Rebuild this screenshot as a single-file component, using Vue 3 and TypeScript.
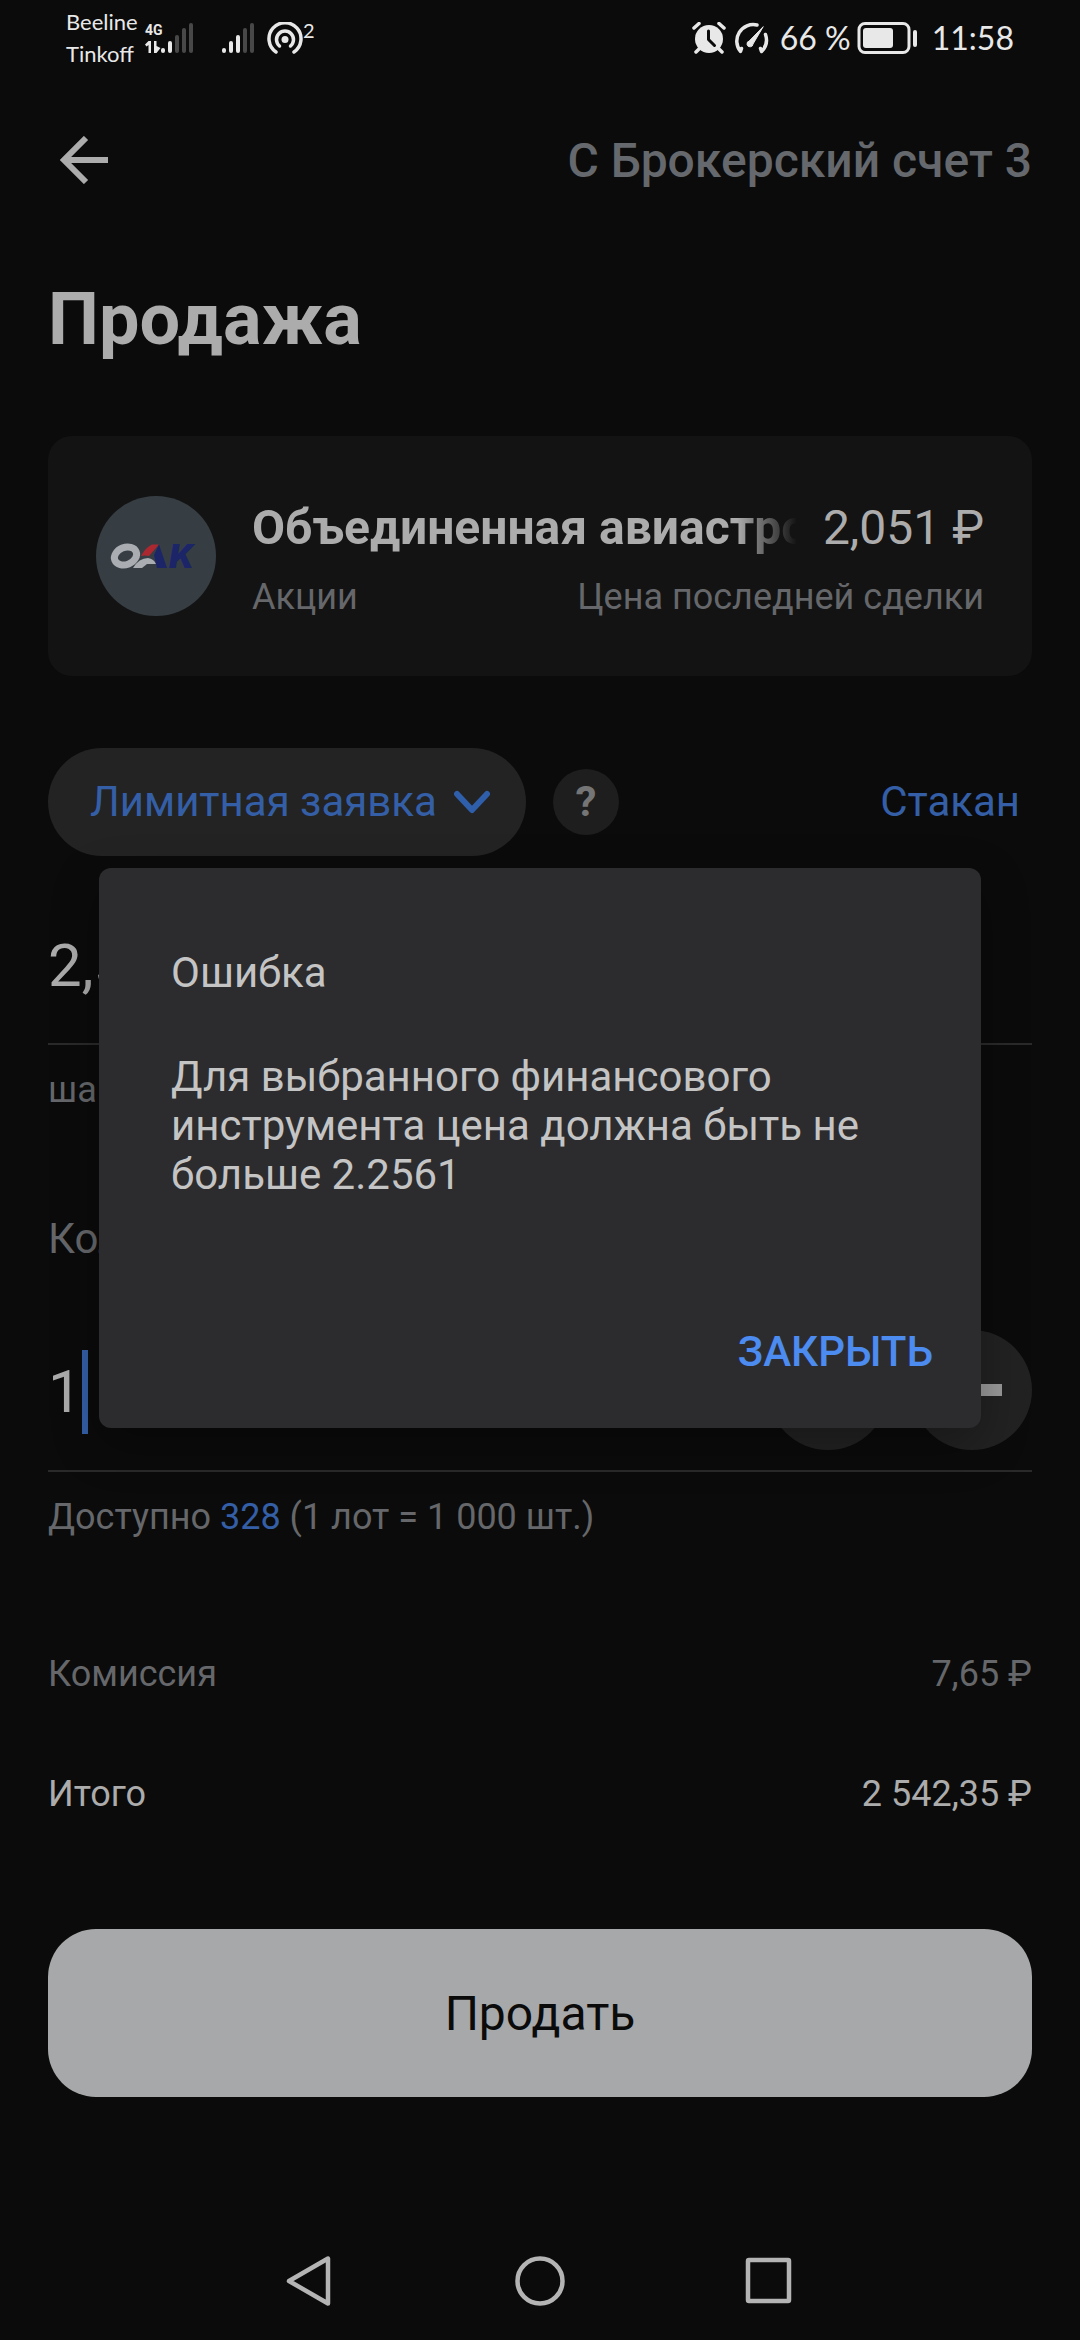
<script setup lang="ts">
import { ref } from 'vue'

const orderType = ref('limit')
const price = ref('2,55')
const quantity = ref('1')

const mobileBars = [
  { x: 0, y: 25, on: true },
  { x: 7, y: 18, on: true },
  { x: 14, y: 12, on: false },
  { x: 21, y: 5, on: false },
  { x: 28, y: 0, on: false },
]
const secondBars = mobileBars.map((bar, i) => ({ ...bar, on: i < 3 }))
</script>

<template>
  <div class="screen">
    <div class="status">
      <div class="carriers">
        <span>Beeline</span>
        <span>Tinkoff</span>
      </div>
      <div class="network">
        <span>4G</span>
        <svg width="16" height="12" viewBox="0 0 16 12" fill="#e8e8e8" aria-hidden="true">
          <path d="M3.500 0h2.500v12H3.500V4L1.500 5.500 0 3.500zM9 0h2.500v5L15.500 7 11.500 12H9z" />
        </svg>
      </div>
      <svg class="bars" width="33" height="30" viewBox="0 0 33 30" aria-hidden="true">
        <rect v-for="bar in mobileBars" :key="bar.x" :x="bar.x" :y="bar.y" width="4" :height="30 - bar.y" rx="2" :fill="bar.on ? '#e8e8e8' : '#484848'" />
      </svg>
      <svg class="bars second" width="33" height="30" viewBox="0 0 33 30" aria-hidden="true">
        <rect v-for="bar in secondBars" :key="bar.x" :x="bar.x" :y="bar.y" width="4" :height="30 - bar.y" rx="2" :fill="bar.on ? '#e8e8e8' : '#484848'" />
      </svg>
      <svg width="36" height="32" viewBox="0 0 36 32" fill="none" stroke="#e8e8e8" stroke-width="3.500" stroke-linecap="round" aria-hidden="true">
        <path d="M9 30A16 16 0 1 1 27 30" />
        <path d="M12.500 24A8.500 8.500 0 1 1 23.500 24" />
        <circle cx="18" cy="17.500" r="3.500" fill="#e8e8e8" stroke="none" />
      </svg>
      <span class="hotspot">2</span>

      <div class="right">
        <svg width="34" height="32" viewBox="0 0 34 32" aria-hidden="true">
          <circle cx="17" cy="17" r="14" fill="#e8e8e8" />
          <path d="M2 6 7 1.500M32 6 27 1.500M7 27 4 30M27 27l3 3" stroke="#e8e8e8" stroke-width="3.500" stroke-linecap="round" />
          <path d="M16.500 9v8.500l6 6" fill="none" stroke="#0b0b0b" stroke-width="3" stroke-linecap="round" stroke-linejoin="round" />
        </svg>
        <svg class="gauge" width="38" height="32" viewBox="0 0 38 32" fill="none" stroke="#e8e8e8" stroke-width="3.500" stroke-linecap="round" stroke-linejoin="round" aria-hidden="true">
          <path d="M25 3A16.500 16.500 0 0 0 8.500 29.500L9.500 26.500M33.500 12.500A16.500 16.500 0 0 1 29.500 29.500L28.500 26.500" />
          <path d="M31 5 21 22a3 3 0 1 1-4-3z" fill="#e8e8e8" stroke-width="1" />
        </svg>
        <span class="charge">66 %</span>
        <svg width="60" height="32" viewBox="0 0 60 32" aria-hidden="true">
          <rect x="2" y="1.500" width="50" height="29" rx="6" fill="none" stroke="#e8e8e8" stroke-width="3" />
          <rect x="6" y="6" width="30" height="20" rx="3" fill="#e8e8e8" />
          <rect x="56" y="8" width="4" height="17" rx="2" fill="#e8e8e8" />
        </svg>
        <span class="clock">11:58</span>
      </div>
    </div>

    <header class="header">
      <button class="back" type="button" aria-label="Назад">
        <svg width="48" height="48" viewBox="0 0 48 48" fill="none" stroke="#acacac" stroke-width="6" aria-hidden="true">
          <path d="M48 24H5M26 2 4 24l22 22" />
        </svg>
      </button>
      <span>С Брокерский счет 3</span>
    </header>

    <main class="content">
      <h1>Продажа</h1>

      <section class="card">
        <svg class="logo" width="120" height="120" viewBox="0 0 120 120" aria-hidden="true">
          <circle cx="60" cy="60" r="60" fill="#363e44" />
          <ellipse cx="29.500" cy="60" rx="11.500" ry="8.500" transform="rotate(-22 29.500 60)" fill="none" stroke="#aaaeb3" stroke-width="7" />
          <path d="M45 60Q50 51 56 48.500H63L53 60Q49 59 45 60z" fill="#ab2830" />
          <path d="M37 72Q43 62 52 62 58 63 60 68H51L46 72z" fill="#aaaeb3" />
          <path d="M63 48.500 71 72H61L58 59z" fill="#1b2568" />
          <text x="73" y="72" font-family="Inter, sans-serif" font-size="33" font-weight="900" font-style="italic" fill="#1b2568">K</text>
        </svg>
        <div class="card-text">
          <div class="card-row">
            <strong>Объединенная авиастроительная корпорация</strong>
            <span class="last-price">2,051 ₽</span>
          </div>
          <div class="card-row muted">
            <span>Акции</span>
            <span>Цена последней сделки</span>
          </div>
        </div>
      </section>

      <div class="order">
        <div class="pill">
          <select v-model="orderType" aria-label="Тип заявки">
            <option value="limit">Лимитная заявка</option>
          </select>
          <svg width="36" height="24" viewBox="0 0 36 24" fill="none" stroke="#2f5eab" stroke-width="6" stroke-linecap="round" stroke-linejoin="round" aria-hidden="true">
            <path d="M3 4 18 20 33 4" />
          </svg>
        </div>
        <button class="help" type="button">?</button>
        <a class="book" href="#">Стакан</a>
      </div>

      <div class="field price-field">
        <input v-model="price" aria-label="Цена" inputmode="decimal" />
      </div>
      <p class="hint">шаг цены 0,001</p>

      <label class="qty-label" for="qty">Количество</label>
      <div class="field qty-field">
        <div class="qty-value">
          <input id="qty" v-model="quantity" inputmode="numeric" :style="{ width: `${quantity.length}ch` }" />
          <i class="caret"></i>
        </div>
        <button class="round" type="button" aria-label="Меньше">
          <svg width="60" height="60" viewBox="0 0 60 60" fill="#9a9a9a" aria-hidden="true">
            <rect y="24" width="60" height="12" />
          </svg>
        </button>
        <button class="round" type="button" aria-label="Больше">
          <svg width="60" height="60" viewBox="0 0 60 60" fill="#9a9a9a" aria-hidden="true">
            <path d="M24 0h12v24h24v12H36v24H24V36H0V24h24z" />
          </svg>
        </button>
      </div>
      <p class="hint">Доступно <a href="#">328</a> (1 лот = 1 000 шт.)</p>

      <div class="sum fee"><span>Комиссия</span><span>7,65 ₽</span></div>
      <div class="sum total"><span>Итого</span><span>2 542,35 ₽</span></div>

      <button class="sell" type="button">Продать</button>
    </main>

    <nav class="system">
      <button type="button" aria-label="Назад">
        <svg width="50" height="52" viewBox="0 0 50 52"><path d="M43 3.500V48.500L4 26z" /></svg>
      </button>
      <button type="button" aria-label="Домой">
        <svg width="50" height="52" viewBox="0 0 50 52"><circle cx="25" cy="26" r="22.500" /></svg>
      </button>
      <button type="button" aria-label="Недавние">
        <svg width="50" height="52" viewBox="0 0 50 52"><rect x="3" y="5" width="41" height="41" rx="1" /></svg>
      </button>
    </nav>

    <div class="overlay">
      <div class="dialog" role="alertdialog" aria-labelledby="dlg-title" aria-describedby="dlg-text">
        <h2 id="dlg-title">Ошибка</h2>
        <p id="dlg-text">Для выбранного финансового инструмента цена должна быть не больше 2.2561</p>
        <button type="button">ЗАКРЫТЬ</button>
      </div>
    </div>
  </div>
</template>

<style>
body {
  background: #0b0b0b;
}
</style>

<style scoped>
.screen {
  position: relative;
  display: flex;
  flex-direction: column;
  min-height: 100vh;
  background: #0b0b0b;
  color: #acacac;
  font-family: Roboto, 'Noto Sans', sans-serif;
}

h1,
h2,
p {
  margin: 0;
  font-weight: 400;
}

button,
input,
select {
  margin: 0;
  padding: 0;
  border: 0;
  background: none;
  color: inherit;
  font: inherit;
  outline: none;
}

a {
  color: #345fa6;
  text-decoration: none;
}

svg {
  display: block;
  flex: none;
}

.status {
  display: flex;
  align-items: center;
  height: 76px;
  padding: 0 66px;
  color: #e8e8e8;
  font-family: Lato, sans-serif;
  font-size: 32px;
  line-height: 32px;
}

.carriers {
  display: flex;
  flex-direction: column;
  width: 79px;
  font-size: 22px;
}

.network {
  display: flex;
  flex-direction: column;
  gap: 4px;
  width: 16px;
  font-family: Roboto, sans-serif;
  font-size: 14px;
  font-weight: 700;
  line-height: 14px;
}

.bars.second {
  margin: 0 12px 0 28px;
}

.hotspot {
  font-size: 20px;
  line-height: 20px;
  align-self: flex-start;
  margin-top: 20px;
}

.right {
  display: flex;
  align-items: center;
  gap: 6px;
  margin-left: auto;
}

.gauge {
  margin-right: 4px;
}

.clock {
  margin-left: 9px;
}

.header {
  display: flex;
  align-items: center;
  justify-content: space-between;
  height: 168px;
  padding: 0 48px 0 60px;
  color: #65686c;
  font-size: 48px;
  font-weight: 500;
}

.content {
  display: flex;
  flex-direction: column;
  padding: 0 48px;
}

h1 {
  margin-top: 34px;
  font-size: 72px;
  font-weight: 700;
  line-height: 84px;
}

.card {
  display: flex;
  align-items: center;
  gap: 36px;
  height: 240px;
  margin-top: 74px;
  padding: 0 48px;
  border-radius: 24px;
  background: #131313;
}

.card-text {
  display: flex;
  flex: 1;
  flex-direction: column;
  gap: 20px;
  min-width: 0;
  padding-top: 6px;
}

.card-row {
  display: flex;
  justify-content: space-between;
  gap: 26px;
  font-size: 48px;
  line-height: 56px;
  white-space: nowrap;
}

.card-row strong {
  flex: 1;
  min-width: 0;
  overflow: hidden;
  -webkit-mask-image: linear-gradient(to left, transparent, #000 60px);
  mask-image: linear-gradient(to left, transparent, #000 60px);
}

.card-row.muted {
  color: #65676a;
  font-size: 36px;
  line-height: 42px;
}

.order {
  display: flex;
  align-items: center;
  margin-top: 72px;
  font-size: 42px;
  line-height: 48px;
}

.pill {
  display: grid;
  align-items: center;
  height: 108px;
  border-radius: 54px;
  background: #232323;
  color: #345fa6;
}

.pill select {
  grid-area: 1 / 1;
  height: 108px;
  padding: 0 89px 0 42px;
  appearance: none;
}

.pill svg {
  grid-area: 1 / 1;
  justify-self: end;
  margin-right: 36px;
  pointer-events: none;
}

.help {
  width: 66px;
  height: 66px;
  margin-left: 27px;
  border-radius: 50%;
  background: #1e1e1e;
  color: #757575;
  font-weight: 700;
}

.book {
  margin-left: auto;
  padding-right: 12px;
}

.field {
  border-bottom: 2px solid #2a2a2a;
  font-size: 60px;
  line-height: 72px;
}

.field input {
  display: block;
  height: 72px;
}

.price-field {
  margin-top: 74px;
  padding-bottom: 41px;
}

.price-field input {
  width: 100%;
}

.hint {
  margin-top: 24px;
  color: #65676a;
  font-size: 36px;
  line-height: 42px;
}

.qty-label {
  margin-top: 104px;
  color: #65676a;
  font-size: 42px;
  line-height: 48px;
}

.qty-field {
  display: flex;
  align-items: center;
  gap: 24px;
  margin-top: 67px;
  padding-bottom: 20px;
}

.qty-value {
  display: flex;
  flex: 1;
  align-items: center;
  padding-top: 4px;
}

.caret {
  width: 6px;
  height: 84px;
  background: #345fa6;
}

.round {
  display: grid;
  place-items: center;
  width: 120px;
  height: 120px;
  border-radius: 50%;
  background: #222222;
}

.sum {
  display: flex;
  justify-content: space-between;
  font-size: 36px;
  line-height: 42px;
}

.fee {
  margin-top: 115px;
  color: #65676a;
}

.total {
  margin-top: 78px;
}

.sell {
  height: 168px;
  margin-top: 114px;
  border-radius: 48px;
  background: #a7a8a9;
  color: #0b0b0b;
  font-size: 48px;
}

.system {
  display: flex;
  align-items: center;
  justify-content: center;
  gap: 180px;
  height: 118px;
  margin-top: auto;
}

.system svg {
  fill: none;
  stroke: #b4b4b4;
  stroke-width: 4.5;
  stroke-linejoin: round;
}

.overlay {
  position: absolute;
  inset: 0;
  display: flex;
  align-items: center;
  padding: 80px 99px 124px;
}

.dialog {
  flex: 1;
  display: flex;
  flex-direction: column;
  padding: 80px 48px 52px 72px;
  border-radius: 12px;
  background: #2c2c2e;
  box-shadow: 0 16px 48px rgba(0, 0, 0, 0.3);
  color: #c4c4c5;
  font-size: 42px;
  line-height: 49px;
}

.dialog h2 {
  font-size: 42px;
}

.dialog p {
  margin: 55px 24px 128px 0;
}

.dialog button {
  align-self: flex-end;
  color: #4c8bf0;
  font-weight: 500;
}
</style>
